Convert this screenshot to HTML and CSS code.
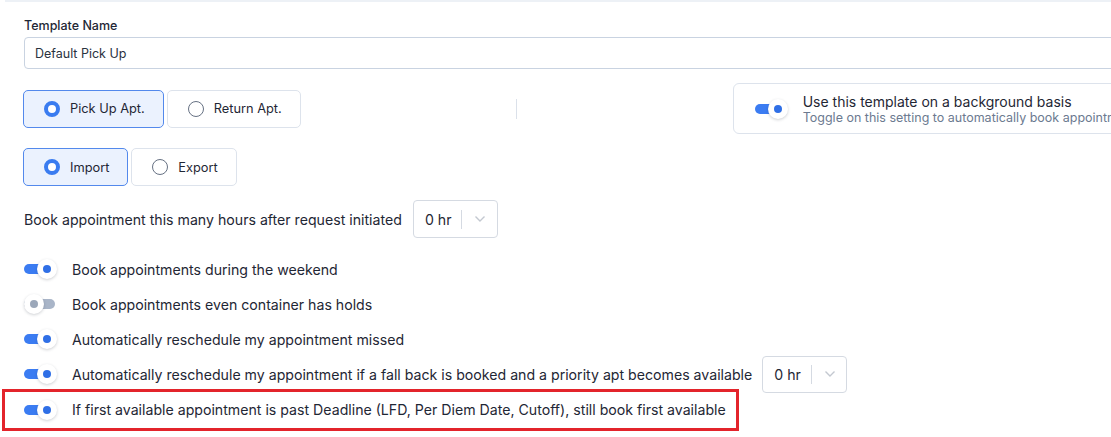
FILE: index.html
```html
<!DOCTYPE html>
<html lang="en">
<head>
    <meta charset="UTF-8">
    <meta name="viewport" content="width=device-width, initial-scale=1.0">
    <title>Appointment Template</title>
    <link rel="stylesheet" href="styles.css">
</head>
<body>

<div class="top-strip"></div>

<div class="page">
    <div class="field-label">Template Name</div>
    <input class="text-input" type="text" value="Default Pick Up">

    <div class="type-row">
        <div class="choice-group">
            <div class="choice selected"><span class="radio"></span>Pick Up Apt.</div>
            <div class="choice"><span class="radio"></span>Return Apt.</div>
        </div>
        <div class="divider"></div>
        <div class="basis-card">
            <span class="toggle on"><span class="track"></span><span class="knob"></span></span>
            <div class="basis-text">
                <div class="basis-title">Use this template on a background basis</div>
                <div class="basis-sub">Toggle on this setting to automatically book appointments with this template</div>
            </div>
        </div>
    </div>

    <div class="choice-group io-row">
        <div class="choice selected"><span class="radio"></span>Import</div>
        <div class="choice"><span class="radio"></span>Export</div>
    </div>

    <div class="hours-row">
        <span>Book appointment this many hours after request initiated</span>
        <div class="hour-select">
            <span class="hour-value">0 hr</span>
            <span class="sep"></span>
            <svg class="chev" width="12" height="8" viewBox="0 0 12 8"><path d="M1.5 1.5 L6 6 L10.5 1.5" fill="none" stroke="#c3c8d0" stroke-width="1.4"/></svg>
        </div>
    </div>

    <div class="options">
        <div class="option first">
            <span class="toggle on"><span class="track"></span><span class="knob"></span></span>
            <span>Book appointments during the weekend</span>
        </div>
        <div class="option">
            <span class="toggle"><span class="track"></span><span class="knob"></span></span>
            <span>Book appointments even container has holds</span>
        </div>
        <div class="option">
            <span class="toggle on"><span class="track"></span><span class="knob"></span></span>
            <span>Automatically reschedule my appointment missed</span>
        </div>
        <div class="option">
            <span class="toggle on"><span class="track"></span><span class="knob"></span></span>
            <span>Automatically reschedule my appointment if a fall back is booked and a priority apt becomes available</span>
            <div class="hour-select">
                <span class="hour-value">0 hr</span>
                <span class="sep"></span>
                <svg class="chev" width="12" height="8" viewBox="0 0 12 8"><path d="M1.5 1.5 L6 6 L10.5 1.5" fill="none" stroke="#c3c8d0" stroke-width="1.4"/></svg>
            </div>
        </div>
        <div class="option marked">
            <span class="toggle on"><span class="track"></span><span class="knob"></span></span>
            <span>If first available appointment is past Deadline (LFD, Per Diem Date, Cutoff), still book first available</span>
        </div>
    </div>
</div>

</body>
</html>
```

FILE: styles.css
```css
html, body {
    margin: 0;
    overflow: hidden;
    background: #ffffff;
}

body {
    font-family: Inter, "Noto Sans", Arial, sans-serif;
    color: #1f2735;
    font-size: 14.15px;
}

.top-strip {
    height: 2px;
    margin-left: 5px;
    background-color: #edf1f6;
}

.page {
    width: 1200px;
    padding: 16px 0 0 24px;
}

.field-label {
    font-size: 12.5px;
    font-weight: 500;
    line-height: 16px;
    margin-bottom: 3px;
}

.text-input {
    display: block;
    box-sizing: border-box;
    width: 1160px;
    height: 32px;
    margin: 0;
    padding: 0 10px;
    border: 1px solid #c9d3e1;
    border-radius: 4px;
    font-family: inherit;
    font-size: 12.5px;
    color: #2a3240;
    outline: none;
}

.type-row {
    display: flex;
    align-items: center;
    height: 51px;
    margin-top: 14px;
}

.choice-group {
    display: flex;
    flex: none;
    gap: 3px;
    margin-left: -1px;
}

.choice {
    display: flex;
    flex: none;
    align-items: center;
    gap: 10px;
    box-sizing: border-box;
    height: 38px;
    padding: 0 18px 0 20px;
    border: 1px solid #dde3ec;
    border-radius: 5px;
    font-size: 12.8px;
    color: #1f2735;
    background: #ffffff;
    white-space: nowrap;
}

.choice.selected {
    background-color: #ebf2fe;
    border-color: #5389ec;
}

.radio {
    flex: none;
    box-sizing: border-box;
    width: 16px;
    height: 16px;
    border-radius: 50%;
    border: 1.5px solid #667183;
    background: #ffffff;
}

.choice.selected .radio {
    border: 4.5px solid #3a7cf0;
}

.divider {
    flex: none;
    width: 1px;
    height: 20px;
    margin: 0 216px 0 215px;
    background-color: #dbe1ea;
}

.basis-card {
    display: flex;
    flex: none;
    align-items: center;
    gap: 15px;
    box-sizing: border-box;
    height: 51px;
    padding: 0 21px;
    border: 1px solid #dde3ec;
    border-radius: 6px;
    white-space: nowrap;
}

.basis-title {
    font-size: 14px;
    line-height: 17px;
}

.basis-sub {
    font-size: 12.5px;
    line-height: 15px;
    color: #6c7a90;
}

.io-row {
    margin-top: 14px;
}

.hours-row {
    display: flex;
    align-items: center;
    gap: 11px;
    margin-top: 14px;
    height: 38px;
    white-space: nowrap;
}

.hour-select {
    display: flex;
    flex: none;
    align-items: center;
    box-sizing: border-box;
    width: 85px;
    height: 38px;
    padding-left: 11px;
    border: 1px solid #d5dae2;
    border-radius: 4px;
    background: #ffffff;
    white-space: nowrap;
}

.hour-value {
    flex: none;
    margin-right: 10px;
}

.sep {
    flex: none;
    width: 1px;
    height: 19px;
    margin-right: 12px;
    background-color: #d5dae2;
}

.chev {
    display: block;
    flex: none;
}

.options {
    margin-top: 13.5px;
}

.option {
    display: flex;
    align-items: center;
    gap: 15px;
    height: 35px;
    white-space: nowrap;
}

.option .hour-select {
    height: 37px;
    margin-left: -5px;
}

.option.marked {
    width: fit-content;
    height: 36px;
    margin: -3px 0 0 -22px;
    padding: 0 10px 0 19px;
    border: 3px solid #e3242b;
}

.toggle {
    position: relative;
    flex: none;
    width: 33px;
    height: 20px;
}

.track {
    position: absolute;
    left: 0;
    top: 5px;
    width: 31px;
    height: 10px;
    border-radius: 5px;
    background-color: #a9b5c8;
}

.knob {
    position: absolute;
    left: 0;
    top: 0;
    width: 20px;
    height: 20px;
    border-radius: 50%;
    background: #ffffff;
    box-shadow: 0 1px 3px rgba(30, 40, 60, 0.22);
}

.knob::after {
    content: "";
    position: absolute;
    left: 6px;
    top: 6px;
    width: 8px;
    height: 8px;
    border-radius: 50%;
    background-color: #9ba7b9;
}

.toggle.on .track {
    background-color: #3b7cf2;
}

.toggle.on .knob {
    left: 13px;
}

.toggle.on .knob::after {
    background-color: #2f6fe6;
}
```
